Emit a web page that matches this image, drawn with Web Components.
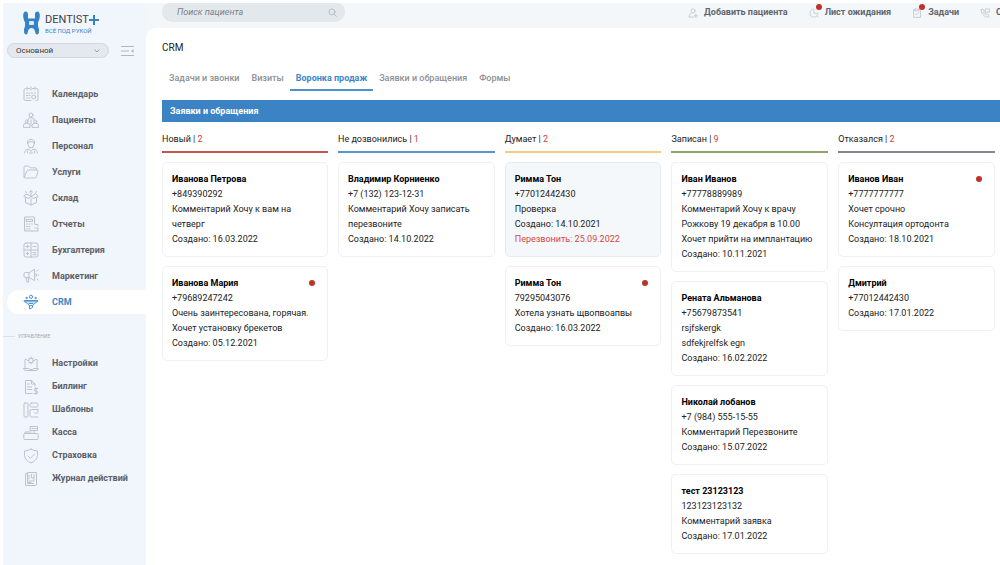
<!DOCTYPE html>
<html lang="ru">
<head>
<meta charset="utf-8">
<title>Dentist+ CRM</title>
<style>
  body {
    margin: 0;
    background: #fff;
    color: #222;
    font: 9px/15px Roboto, "Liberation Sans", sans-serif;
    overflow: hidden;
  }
</style>
</head>
<body>
<crm-app>
  <crm-sidebar slot="sidebar">
    <nav-item icon="calendar">Календарь</nav-item>
    <nav-item icon="patients">Пациенты</nav-item>
    <nav-item icon="staff">Персонал</nav-item>
    <nav-item icon="folder">Услуги</nav-item>
    <nav-item icon="stock">Склад</nav-item>
    <nav-item icon="reports">Отчеты</nav-item>
    <nav-item icon="accounting">Бухгалтерия</nav-item>
    <nav-item icon="marketing">Маркетинг</nav-item>
    <nav-item icon="funnel" active>CRM</nav-item>
    <nav-item slot="manage" icon="settings">Настройки</nav-item>
    <nav-item slot="manage" icon="billing">Биллинг</nav-item>
    <nav-item slot="manage" icon="templates">Шаблоны</nav-item>
    <nav-item slot="manage" icon="cash">Касса</nav-item>
    <nav-item slot="manage" icon="shield">Страховка</nav-item>
    <nav-item slot="manage" icon="journal">Журнал действий</nav-item>
  </crm-sidebar>

  <top-bar slot="topbar">
    <top-link icon="adduser">Добавить пациента</top-link>
    <top-link icon="clock" alert>Лист ожидания</top-link>
    <top-link icon="clipboard" alert>Задачи</top-link>
    <top-link icon="phone">С</top-link>
  </top-bar>

  <tab-list>
    <tab-item>Задачи и звонки</tab-item>
    <tab-item>Визиты</tab-item>
    <tab-item active>Воронка продаж</tab-item>
    <tab-item>Заявки и обращения</tab-item>
    <tab-item>Формы</tab-item>
  </tab-list>

  <funnel-board heading="Заявки и обращения">
    <board-column name="Новый" count="2" color="#c8554f">
      <lead-card name="Иванова Петрова" phone="+849390292" created="16.03.2022">Комментарий Хочу к вам на четверг</lead-card>
      <lead-card name="Иванова Мария" phone="+79689247242" created="05.12.2021" unread>Очень заинтересована, горячая. Хочет установку брекетов</lead-card>
    </board-column>
    <board-column name="Не дозвонились" count="1" color="#5b93c9">
      <lead-card name="Владимир Корниенко" phone="+7 (132) 123-12-31" created="14.10.2022">Комментарий Хочу записать перезвоните</lead-card>
    </board-column>
    <board-column name="Думает" count="2" color="#f0cf7c">
      <lead-card name="Римма Тон" phone="+77012442430" created="14.10.2021" due="25.09.2022">Проверка</lead-card>
      <lead-card name="Римма Тон" phone="79295043076" created="16.03.2022" unread>Хотела узнать щвопвоапвы</lead-card>
    </board-column>
    <board-column name="Записан" count="9" color="#8fa56c">
      <lead-card name="Иван Иванов" phone="+77778889989" created="10.11.2021">Комментарий Хочу к врачу<br>Рожкову 19 декабря в 10.00<br>Хочет прийти на имплантацию</lead-card>
      <lead-card name="Рената Альманова" phone="+75679873541" created="16.02.2022">rsjfskergk<br>sdfekjrelfsk egn</lead-card>
      <lead-card name="Николай лобанов" phone="+7 (984) 555-15-55" created="15.07.2022">Комментарий Перезвоните</lead-card>
      <lead-card name="тест 23123123" phone="123123123132" created="17.01.2022">Комментарий заявка</lead-card>
    </board-column>
    <board-column name="Отказался" count="2" color="#84868c">
      <lead-card name="Иванов Иван" phone="+7777777777" created="18.10.2021" unread>Хочет срочно<br>Консултация ортодонта</lead-card>
      <lead-card name="Дмитрий" phone="+77012442430" created="17.01.2022"></lead-card>
    </board-column>
  </funnel-board>
</crm-app>

<script>
const ICONS = {
  calendar: '<path d="M3 2.500H2.500Q1 2.500 1 4v9q0 1.500 1.500 1.500H8M13 2.500h.5Q15 2.500 15 4v9q0 1.500-1.500 1.500H13M5 2.500h1.500M9.500 2.500H11M4 1v3M8 1v3M12 1v3"/><path d="M3.500 7h1M6 7h1M8.500 7h1M11 7h1.500M3.500 9.500h1M6 9.500h1M3.500 12h1M6 12h1"/><circle cx="10.700" cy="11" r="2"/>',
  patients: '<circle cx="8" cy="3" r="2"/><path d="M4.700 8.500Q5 5.500 8 5.500t3.300 3"/><circle cx="3.700" cy="9.500" r="1.500"/><circle cx="12.300" cy="9.500" r="1.500"/><path d="M.5 15v-1.500q0-2.300 3.200-2.300T7 13.500V15zM9 15v-1.500q0-2.300 3.300-2.300t3.200 2.300V15zM8 8v5"/>',
  staff: '<path d="M4.500 5.500V3Q8-.5 11.500 3v2.500M4.500 4.200q3.500-1.500 7 0M5 5v1.500Q5.500 10 8 10t3-3.500V5M1.500 15q0-3.500 4.500-4l2 2.500 2-2.500q4.500.5 4.500 4M4.500 13v2M11.500 13v2M6.500 15h3"/>',
  folder: '<path d="M1 12V3.500Q1 2 2.500 2h3L7 3.800h5q1.500 0 1.500 1.500v.7M1.200 13.500 4 6.800Q4.300 6 5.200 6H14q1.400 0 1 1.300l-1.700 5.500q-.4 1.200-1.600 1.200H2.500Q1 14 1 12.500"/>',
  stock: '<path d="M8 6 3 4 .8 6.500 6 8.500 8 6l2 2.500 5.200-2L13 4zM2.500 8v4.500L8 15l5.500-2.500V8M8 9v6M8 5V.8M6.500 2 8 .8 9.500 2M3.500 3 2.500 1.500M12.500 3l1-1.500"/>',
  reports: '<path d="M9 15H1.500V1h10v7M3.500 3.500h6v2h-6z"/><path d="M3.500 8h1M6 8h1M8.500 8h1M3.500 10.500h1M6 10.500h1M3.500 13h1M6 13h1"/><path d="M15 10V8.500h-2.500M12 12h3v3H9"/>',
  accounting: '<rect x="1" y="1" width="14" height="14" rx="2"/><path d="M8 1v14M1 8h14M3 4.500h3M4.500 3v3M10 4.500h3M3.300 11.500h2.400M4.500 10.300v2.400M10 10.700h3M10 12.700h3"/>',
  marketing: '<path d="M6 4.500H2.500Q1 4.500 1 6v2q0 1.500 1.500 1.500H6l5.500 3v-11zM6 4.500v5M3 9.500l1 4.500h2l-.8-4.500M13 5.500q1.200 1.500 0 3M14 3l1-1M14.500 7h1M14 11l1 1"/>',
  funnel: '<path d="M1.500 6.500h13v1.300h-13zM2.500 8l4 3.500h3L13.500 8M6.500 11.500V15l3-1.500v-2M6 9.500h4"/><circle cx="8" cy="2.800" r="1.600"/><circle cx="3.500" cy="4" r=".7"/><circle cx="12.500" cy="4" r=".7"/>',
  settings: '<path d="M3.500 3.500H2V12M12.500 3.500H14V12M.8 12.500h5l.7 1h3l.7-1h5q0 2-1.700 2H2.500Q.8 14.500.8 12.500z"/><circle cx="8" cy="4.500" r="2.300"/><path d="M8 1v1.200M8 6.800V8M4.500 4.500h1.200M10.300 4.500h1.200M5.500 2l.8.8M10.500 2l-.8.800M5.500 7l.8-.8M10.500 7l-.8-.8"/>',
  billing: '<path d="M9 14.500H2.500v-13h6L12 5v2M8.500 1.500V5H12M4.500 5h2M4.500 8h4M4.500 10.500h4"/><path d="M14.800 9.500h-2.300q-1.300 0-1.300 1.200T12.500 12h1q1.300 0 1.300 1.200t-1.300 1.300H11M13 8.500v7"/>',
  templates: '<rect x="1" y="1" width="4" height="14" rx="1"/><rect x="7" y="1" width="8" height="4" rx="1.500"/><path d="M15 7.500H8.500Q7 7.500 7 9v4.500Q7 15 8.500 15H15M14.800 7.500v2M12 11h3"/>',
  cash: '<rect x=".8" y="8.500" width="14.400" height="6" rx="1"/><path d="M2 8.500V7h6M7.500 1.500h7v4h-7zM9 3.500h1M11 3.500h1M13 3.500h.5M11 5.500v3"/>',
  shield: '<path d="M8 1Q5 3 1.500 3v4.500Q2 12.500 8 15q6-2.500 6.500-7.500V3Q11 3 8 1z"/><path d="m5 8 2.300 2.300L11.500 6"/>',
  journal: '<path d="M4 2.500H2.500v12h9.500q1.500 0 1.500-1.500V1.500H4.500v10H8M6 4v4M8.500 3.500V7h2.500M11 3.500V9M6 10h5M4.500 12.500h6"/>',
  adduser: '<circle cx="8" cy="4.500" r="3.200"/><path d="M5.500 8Q1.500 9 1.500 14.500h8M12.500 10v5M10 12.500h5"/>',
  clock: '<path d="M14.500 7.500A6.500 6.500 0 1 1 7.500 1.500M8 4v4.500h4M13 13l1.500 1.500"/>',
  clipboard: '<path d="M5 3H2.500v12h11V3H11M5 1.500h6v3H5zM5 9l2 2 4-4"/>',
  phone: '<path d="M2 2.500 4.500 1.500 7 5 5.500 7q1 2.500 3.500 4l2-1.500 3.500 2.500-1 2.500Q8 16 4 10 1 6 2 2.500zM9 1.500h6v5H11L9 8z"/>',
  search: '<circle cx="7" cy="7" r="5.300"/><path d="m11 11 4 4"/>'
};

class BaseElement extends HTMLElement {
  constructor() {
    super();
    this.root = this.attachShadow({ mode: "open" });
  }
  connectedCallback() {
    this.root.innerHTML = this.render();
  }
  get(name) {
    return this.getAttribute(name) || "";
  }
}

class AppIcon extends BaseElement {
  render() {
    return `
      <style>
        :host { display: block; width: 16px; height: 16px; }
        svg { display: block; width: 100%; height: 100%; }
      </style>
      <svg viewBox="0 0 16 16" fill="none" stroke="currentColor" stroke-linecap="round" stroke-linejoin="round" aria-hidden="true">${ICONS[this.get("name")]}</svg>
    `;
  }
}

class CrmApp extends BaseElement {
  render() {
    return `
      <style>
        :host {
          display: grid;
          grid-template-columns: 143px minmax(0, 1fr);
          min-height: calc(100vh - 3px);
          margin: 3px 0 0 3px;
          background: #f3f7fa;
        }
        .page { display: flex; flex-direction: column; min-width: 0; }
        main {
          flex: 1;
          padding: 12px 0 0 16px;
          background: #fff;
          border-radius: 10px 0 0 0;
        }
        h1 { margin: 0; font-size: 10px; font-weight: 400; line-height: 16px; }
      </style>
      <slot name="sidebar"></slot>
      <div class="page">
        <slot name="topbar"></slot>
        <main>
          <h1>CRM</h1>
          <slot></slot>
        </main>
      </div>
    `;
  }
}

class CrmLogo extends BaseElement {
  render() {
    return `
      <style>
        :host { display: block; }
        a { display: flex; align-items: center; gap: 5px; color: #3f4247; text-decoration: none; }
        .name { display: flex; align-items: center; font: 11px/15px Roboto, sans-serif; }
        .slogan { display: block; font: 6px/7px Roboto, sans-serif; color: #3c86c6; white-space: nowrap; }
        svg { display: block; }
      </style>
      <a href="#">
        <svg width="17" height="24" viewBox="0 0 17 24" fill="#3582c4" aria-hidden="true">
          <path d="M2 .5Q5 0 5 3v4.500h7V3q0-3 3-2.500 2 1 1.800 5Q16.500 9 15 11.500q-.5 4 1 7 .5 3.500-1.500 5-2 .5-2.500-3-.5-3.500-3.500-3.500T5 20.500q-.5 3.500-2.500 3-2-1.500-1.500-5 1.500-3 1-7Q.5 9 .2 5.500 0 1.500 2 .5z"/>
          <rect x="6" y="10" width="5" height="4" rx="1" fill="#dcebf7"/>
        </svg>
        <span>
          <span class="name">DENTIST
            <svg width="10" height="10" viewBox="0 0 10 10" stroke="#3582c4" stroke-width="2" aria-hidden="true"><path d="M5 0v10M0 5h10"/></svg>
          </span>
          <span class="slogan">ВСЁ ПОД РУКОЙ</span>
        </span>
      </a>
    `;
  }
}

class CrmSidebar extends BaseElement {
  render() {
    return `
      <style>
        :host { display: block; padding-top: 8px; background: #f1f5fc; }
        crm-logo { margin-left: 20px; }
        .branch { display: flex; align-items: center; gap: 12px; margin: 8px 12px 0 4px; }
        label { flex: 1; display: flex; align-items: center; position: relative; }
        select {
          appearance: none;
          width: 100%;
          height: 15px;
          padding: 0 8px;
          border: 1px solid #d3d8dd;
          border-radius: 8px;
          background: #e5e9ee;
          color: #33363a;
          font: 8px/13px Roboto, sans-serif;
        }
        label svg { position: absolute; right: 9px; pointer-events: none; }
        button { padding: 0; border: 0; background: none; color: #b0b7c1; }
        svg { display: block; }
        nav { display: flex; flex-direction: column; gap: 2px; }
        .main { margin-top: 24px; }
        .manage { gap: 0; --item-height: 23px; margin-top: 10px; }
        .caption {
          display: flex;
          align-items: center;
          gap: 3px;
          margin-top: 17px;
          color: #a3aab3;
          font-size: 5px;
          line-height: 11px;
        }
        .caption::before { content: ""; width: 12px; height: 1px; background: #dde2e8; }
      </style>
      <crm-logo></crm-logo>
      <div class="branch">
        <label>
          <select aria-label="Филиал"><option>Основной</option></select>
          <svg width="6" height="4" viewBox="0 0 6 4" fill="none" stroke="#9aa0a8"><path d="m.5.5 2.500 2.500L5.500.5"/></svg>
        </label>
        <button type="button" aria-label="Свернуть меню">
          <svg width="13" height="12" viewBox="0 0 13 12" fill="none" stroke="currentColor"><path d="M0 1.500h13M0 6h8M0 10.500h13"/><path d="m12.500 4-2.500 2 2.500 2z" fill="currentColor" stroke="none"/></svg>
        </button>
      </div>
      <nav class="main"><slot></slot></nav>
      <div class="caption">УПРАВЛЕНИЕ</div>
      <nav class="manage"><slot name="manage"></slot></nav>
    `;
  }
}

class NavItem extends BaseElement {
  render() {
    return `
      <style>
        :host { display: block; padding-left: 4px; }
        a {
          display: flex;
          align-items: center;
          gap: 13px;
          height: var(--item-height, 24px);
          padding-left: 16px;
          border-radius: 12px 0 0 12px;
          color: #5b6067;
          font-weight: 700;
          text-decoration: none;
        }
        app-icon { color: #bcc3ce; }
        :host([active]) a { background: #fff; color: #3c86c6; }
        :host([active]) app-icon { color: #4f95cf; }
      </style>
      <a href="#"><app-icon name="${this.get("icon")}"></app-icon><slot></slot></a>
    `;
  }
}

class TopBar extends BaseElement {
  render() {
    return `
      <style>
        :host { display: flex; align-items: flex-start; height: 25px; padding-left: 16px; }
        label {
          display: flex;
          align-items: center;
          flex: 0 1 183px;
          box-sizing: border-box;
          height: 19px;
          padding: 0 8px 0 15px;
          border-radius: 8px 8px 10px 10px;
          background: #e3e8ed;
          color: #9aa1a8;
        }
        input {
          flex: 1;
          min-width: 0;
          padding: 0;
          border: 0;
          outline: 0;
          background: none;
          color: #6f767d;
          font: italic 9px/15px Roboto, sans-serif;
        }
        input::placeholder { color: #7b8289; }
        app-icon { width: 9px; height: 9px; }
        nav { display: flex; gap: 21px; margin: 0 -2px 0 auto; padding-top: 2px; }
      </style>
      <label>
        <input type="search" placeholder="Поиск пациента" aria-label="Поиск пациента">
        <app-icon name="search"></app-icon>
      </label>
      <nav><slot></slot></nav>
    `;
  }
}

class TopLink extends BaseElement {
  render() {
    return `
      <style>
        :host { display: block; }
        a {
          display: flex;
          align-items: center;
          gap: 6px;
          color: #5f656c;
          font-weight: 700;
          text-decoration: none;
          white-space: nowrap;
        }
        .icon { position: relative; color: #b0b7bf; }
        app-icon { width: 10px; height: 10px; }
        :host([alert]) .icon::after {
          content: "";
          position: absolute;
          top: -4px;
          right: -3px;
          width: 6px;
          height: 6px;
          border-radius: 50%;
          background: #c23127;
        }
      </style>
      <a href="#"><span class="icon"><app-icon name="${this.get("icon")}"></app-icon></span><slot></slot></a>
    `;
  }
}

class TabList extends BaseElement {
  render() {
    return `
      <style>
        :host { display: flex; margin-top: 11px; padding-left: 1px; }
      </style>
      <slot></slot>
    `;
  }
}

class TabItem extends BaseElement {
  render() {
    return `
      <style>
        button {
          display: block;
          padding: 4px 6px 3px;
          border: 0;
          border-bottom: 2px solid transparent;
          background: none;
          color: #8d9196;
          font: 500 9px/15px Roboto, sans-serif;
          white-space: nowrap;
        }
        :host([active]) button { border-color: #4a92cc; color: #3c86c6; font-weight: 700; }
      </style>
      <button type="button"><slot></slot></button>
    `;
  }
}

class FunnelBoard extends BaseElement {
  render() {
    return `
      <style>
        :host { display: block; margin-top: 9px; }
        h2 {
          margin: 0;
          padding: 0 8px;
          background: #3b83c5;
          color: #fff;
          font-size: 9px;
          line-height: 22px;
        }
        .columns {
          display: grid;
          grid-template-columns: 18fr repeat(4, 17fr);
          gap: 10px;
          align-items: start;
          margin: 10px 5px 0 0;
        }
      </style>
      <h2>${this.get("heading")}</h2>
      <div class="columns"><slot></slot></div>
    `;
  }
}

class BoardColumn extends BaseElement {
  render() {
    return `
      <style>
        :host { display: block; min-width: 0; }
        h3 {
          margin: 0 0 9px;
          padding-bottom: 4px;
          border-bottom: 2px solid ${this.get("color")};
          font-size: 9px;
          font-weight: 400;
        }
        .count { color: #d23c3c; }
        .cards { display: flex; flex-direction: column; gap: 9px; }
      </style>
      <h3>${this.get("name")} | <span class="count">${this.get("count")}</span></h3>
      <div class="cards"><slot></slot></div>
    `;
  }
}

class LeadCard extends BaseElement {
  render() {
    const due = this.get("due");
    return `
      <style>
        :host {
          display: block;
          position: relative;
          padding: 9px;
          border: 1px solid #eff0f2;
          border-radius: 5px;
        }
        :host([due]) { background: #f4f8fb; border-color: #e6ebf0; }
        :host([unread])::after {
          content: "";
          position: absolute;
          top: 13px;
          right: 12px;
          width: 6px;
          height: 6px;
          border-radius: 50%;
          background: #c23127;
        }
        h4 { margin: 0; color: #000; font-size: 9px; }
        .due { color: #d8443f; }
      </style>
      <h4>${this.get("name")}</h4>
      <div>${this.get("phone")}</div>
      <div><slot></slot></div>
      <div>Создано: ${this.get("created")}</div>
      ${due ? `<div class="due">Перезвонить: ${due}</div>` : ""}
    `;
  }
}

customElements.define("app-icon", AppIcon);
customElements.define("crm-logo", CrmLogo);
customElements.define("nav-item", NavItem);
customElements.define("crm-sidebar", CrmSidebar);
customElements.define("top-link", TopLink);
customElements.define("top-bar", TopBar);
customElements.define("tab-item", TabItem);
customElements.define("tab-list", TabList);
customElements.define("lead-card", LeadCard);
customElements.define("board-column", BoardColumn);
customElements.define("funnel-board", FunnelBoard);
customElements.define("crm-app", CrmApp);
</script>
</body>
</html>
